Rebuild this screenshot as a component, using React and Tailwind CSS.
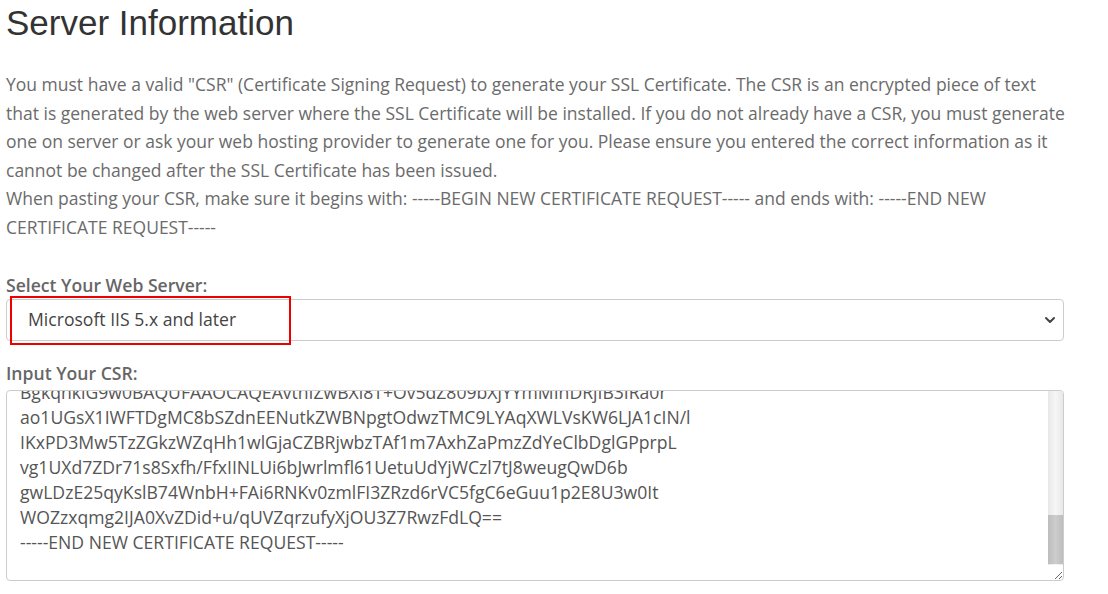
import React, { useEffect, useRef } from 'react'

const CSR_LINES = [
  '-----BEGIN NEW CERTIFICATE REQUEST-----',
  'MIIDUDCCArkCAQAwdTEWMBQGA1UEAxMNd3d3LmV4YW1wbGUuY29tMRAwDgYDVQQL',
  'EwdJVCBEZXB0MRQwEgYDVQQKEwtFeGFtcGxlIEluYzEQMA4GA1UEBxMHU2VhdHRs',
  'ZTETMBEGA1UECBMKV2FzaGluZ3RvbjELMAkGA1UEBhMCVVMwgZ8wDQYJKoZIhvcN',
  'AQEBBQADgY0AMIGJAoGBALmIVV2bj8P6tGkZzQJoCnqv8V3YVnHjJb1u2sQqP0pr',
  'x3Kc8fG0t6o2dLwN9rS1vXqZyA4hMbE7uJ0gWkR5cT3nYp8lFdOeI2mHsV6aQxBz',
  'Lk9yUjC4wPr7Ntg1sXeDvbHf0iKm3oZq5GcYlR8aW2uJnTpE6dM1vSxQ4yBhFz7K',
  'AgMBAAGgggGWMBoGCisGAQQBgjcNAgMxDBYKNS4yLjM3OTAuMjB7BgorBgEEAYI3',
  'AgEOMW0wazAOBgNVHQ8BAf8EBAMCBPAwRAYJKoZIhvcNAQkPBDcwNTAOBggqhkiG',
  '9w0DAgICAIAwDgYIKoZIhvcNAwQCAgCAMAcGBSsOAwIHMAoGCCqGSIb3DQMHMBMG',
  'A1UdJQQMMAoGCCsGAQUFBwMBMIH9BgorBgEEAYI3DQICMYHuMIHrAgEBHloATQBp',
  'AGMAcgBvAHMAbwBmAHQAIABSAFMAQQAgAFMAQwBoAGEAbgBuAGUAbAAgAEMAcgB5',
  'AHAAdABvAGcAcgBhAHAAaABpAGMAIABQAHIAbwB2AGkAZABlAHIDgYkAXzT3kQ8r',
  'Vb2uYp0LmH6cN4dEw1sJ9aKfR7tZxG3oUiCqWeD5nB8vMh2yTgL0jSkX4Pl6FrOa',
  'QzE1cYdN7uH9mKs3VbJ0wTo8LiR2pGxA5fCeZ6nUqDy4MtBhWvS1XaOgK7rIjPlE',
  'AAAAAAAAMA0GCSqGSIb3DQEBBQUAA4GBAE8vHqKdP2sYw1mZr9LxJcT6nUoB3gFe',
  'tR5aXyC0kW7iNbQ4hVzMp2sDfLj8uOe1GcKrYm3lTxB6wIa9ZnP0vSdEq5HyUgJo',
  'MIIBIjANB9wR3kLmQ7sTz2uVfXc8yHa1dNpE4bGj6oKi0rSeWtY5lPqZxCvMnD2A',
  'BgkqhkiG9w0BAQUFAAOCAQEAvthIZwBXl8T+Ov5dZ809bXjYYmMInDRjIB3IRa0r',
  'ao1UGsX1IWFTDgMC8bSZdnEENutkZWBNpgtOdwzTMC9LYAqXWLVsKW6LJA1cIN/l',
  'IKxPD3Mw5TzZGkzWZqHh1wlGjaCZBRjwbzTAf1m7AxhZaPmzZdYeClbDglGPprpL',
  'vg1UXd7ZDr71s8Sxfh/FfxIINLUi6bJwrlmfl61UetuUdYjWCzl7tJ8weugQwD6b',
  'gwLDzE25qyKslB74WnbH+FAi6RNKv0zmlFI3ZRzd6rVC5fgC6eGuu1p2E8U3w0It',
  'WOZzxqmg2IJA0XvZDid+u/qUVZqrzufyXjOU3Z7RwzFdLQ==',
  '-----END NEW CERTIFICATE REQUEST-----',
  '',
]

export default function App() {
  const csrRef = useRef(null)

  // the reference shows the CSR box scrolled all the way down
  useEffect(() => {
    const el = csrRef.current
    if (el) el.scrollTop = el.scrollHeight
  }, [])

  return (
    <div className="min-h-[594px] bg-white pl-[6px] font-['Open_Sans',sans-serif]">
      <div className="w-[1058px]">
        <h1 className="mt-[4px] text-[35px] leading-[38px] font-normal text-[#333333] font-['Liberation_Sans',Arial,sans-serif]">
          Server Information
        </h1>

        <p className="mt-[28px] w-[1100px] whitespace-nowrap text-[17.5px] leading-[28.6px] text-[#6b6b6b]">
          You must have a valid "CSR" (Certificate Signing Request) to generate your SSL Certificate. The CSR is an encrypted piece of text
          <br />
          that is generated by the web server where the SSL Certificate will be installed. If you do not already have a CSR, you must generate
          <br />
          one on server or ask your web hosting provider to generate one for you. Please ensure you entered the correct information as it
          <br />
          cannot be changed after the SSL Certificate has been issued.
          <br />
          When pasting your CSR, make sure it begins with: -----BEGIN NEW CERTIFICATE REQUEST----- and ends with: -----END NEW
          <br />
          CERTIFICATE REQUEST-----
        </p>

        {/* Web server */}
        <label className="mt-[31px] block text-[17.6px] leading-[24px] font-semibold text-[#666666]">
          Select Your Web Server:
        </label>
        <div className="relative mt-[2px]">
          <select
            defaultValue="iis5"
            className="block h-[42px] w-full appearance-none rounded-[4px] border border-[#cccccc] bg-white pl-[21px] pr-10 text-[17.6px] text-[#444444] outline-none"
          >
            <option value="iis5">Microsoft IIS 5.x and later</option>
            <option value="apache">Apache + OpenSSL</option>
            <option value="nginx">Nginx</option>
            <option value="tomcat">Tomcat</option>
            <option value="other">Other</option>
          </select>
          <svg
            className="pointer-events-none absolute right-[8px] top-[16px]"
            width="12" height="10" viewBox="0 0 12 10" fill="none"
            stroke="#444444" strokeWidth="2" strokeLinecap="round" strokeLinejoin="round"
          >
            <polyline points="2 3 6 7 10 3" />
          </svg>
          {/* red highlight box */}
          <div className="pointer-events-none absolute left-[4px] top-[-3px] h-[49px] w-[281px] border-2 border-[#ee0000]" />
        </div>

        {/* CSR */}
        <label className="mt-[20px] block text-[17.6px] leading-[24px] font-semibold text-[#666666]">
          Input Your CSR:
        </label>
        <div className="relative mt-[5px]">
          <textarea
            ref={csrRef}
            defaultValue={CSR_LINES.join('\n')}
            spellCheck={false}
            className="block h-[191px] w-full resize-y overflow-hidden rounded-[4px] border border-[#cccccc] bg-white pl-[13px] pr-[24px] pt-[6px] pb-0 text-[17.6px] leading-[25px] text-[#555555] outline-none whitespace-pre"
          />
          {/* scrollbar, as the browser drew it */}
          <div className="pointer-events-none absolute right-[1px] top-[1px] flex h-[174px] w-[15px] flex-col justify-end overflow-hidden rounded-tr-[3px] bg-gradient-to-r from-[#e8e8e8] via-[#f6f6f6] to-[#e8e8e8]">
            <div className="mb-px h-[49px] w-full bg-gradient-to-r from-[#bdbdbd] via-[#cdcdcd] to-[#bdbdbd]" />
          </div>
        </div>
      </div>
    </div>
  )
}
